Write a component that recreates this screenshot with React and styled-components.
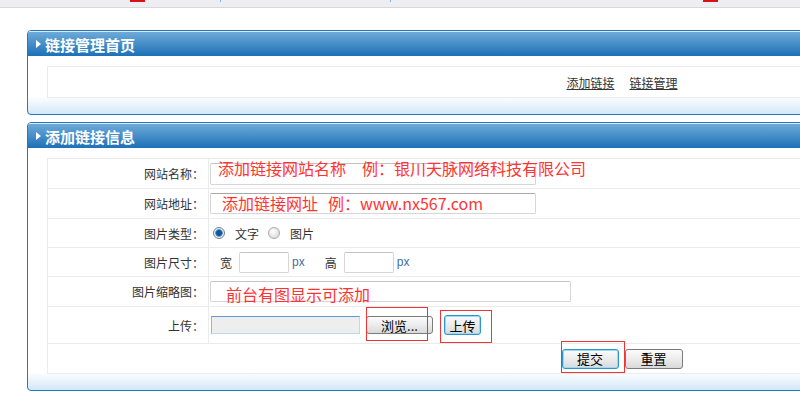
import styled, { createGlobalStyle } from 'styled-components';

const GlobalStyle = createGlobalStyle`
    html, body {
        margin: 0;
        padding: 0;
        background: #fff;
        overflow: hidden;
    }

    body {
        font-family: "Noto Sans CJK SC", "Liberation Sans", sans-serif;
        font-size: 12px;
        color: #333;
    }
`

const App = () => {
    return (
        <>
            <GlobalStyle />
            <TopStrip>
                <Tick $ml={130} $w={15} $c='#d8121a' />
                <Tick $ml={75} $w={1} $c='#7fb6e6' />
                <Tick $ml={169} $w={1} $c='#7fb6e6' />
                <Tick $ml={312} $w={15} $c='#d8121a' />
            </TopStrip>
            <Main>
                <Panel>
                    <Header>链接管理首页</Header>
                    <Body>
                        <Table>
                            <Row $h={30}>
                                <Centered $gap={15}>
                                    <Link href='#'>添加链接</Link>
                                    <Link href='#'>链接管理</Link>
                                </Centered>
                            </Row>
                        </Table>
                    </Body>
                </Panel>

                <Panel>
                    <Header>添加链接信息</Header>
                    <Body>
                        <Table>
                            <Row $h={29}>
                                <Label>网站名称：</Label>
                                <Value>
                                    <Field>
                                        <TextInput $w={326} $h={22} />
                                        <Note $x={8} $y={-3}>添加链接网站名称　例：银川天脉网络科技有限公司</Note>
                                    </Field>
                                </Value>
                            </Row>
                            <Row $h={29}>
                                <Label>网站地址：</Label>
                                <Value>
                                    <Field>
                                        <TextInput $w={326} $h={21} $dark />
                                        <Note $x={12} $y={2}>添加链接网址<Spacer $w={10} />例：www.nx567.com</Note>
                                    </Field>
                                </Value>
                            </Row>
                            <Row $h={28}>
                                <Label>图片类型：</Label>
                                <Value>
                                    <Radio $on $ml={3} />
                                    <Caption $ml={10}>文字</Caption>
                                    <Radio $ml={9} />
                                    <Caption $ml={10}>图片</Caption>
                                </Value>
                            </Row>
                            <Row $h={28}>
                                <Label>图片尺寸：</Label>
                                <Value>
                                    <Caption $ml={10}>宽</Caption>
                                    <TextInput $w={50} $h={21} $ml={7} />
                                    <Unit>px</Unit>
                                    <Caption $ml={20}>高</Caption>
                                    <TextInput $w={50} $h={21} $ml={7} />
                                    <Unit>px</Unit>
                                </Value>
                            </Row>
                            <Row $h={29}>
                                <Label>图片缩略图：</Label>
                                <Value>
                                    <Field>
                                        <TextInput $w={361} $h={21} />
                                        <Note $x={16} $y={5}>前台有图显示可添加</Note>
                                    </Field>
                                </Value>
                            </Row>
                            <Row $h={36}>
                                <Label>上传：</Label>
                                <Value>
                                    <FileBox />
                                    <Marked $ml={6}>
                                        <Button $w={67} $h={18}>浏览...</Button>
                                        <RedBox $inset='-9px 5px -7px 0' />
                                    </Marked>
                                    <Marked $ml={11}>
                                        <Button $w={37} $h={20} $blue>上传</Button>
                                        <RedBox $inset='-5px -11px -8px -4px' />
                                    </Marked>
                                </Value>
                            </Row>
                            <Row $h={29}>
                                <Centered $gap={6}>
                                    <Marked>
                                        <Button $w={57} $h={20} $blue>提交</Button>
                                        <RedBox $inset='-8px -6px -4px -1px' />
                                    </Marked>
                                    <Button $w={58} $h={20}>重置</Button>
                                </Centered>
                            </Row>
                        </Table>
                    </Body>
                </Panel>
            </Main>
        </>
    )
}

const TopStrip = styled.div`
    display: flex;
    align-items: flex-start;
    height: 7px;
    background: #eeedf2;
    border-bottom: 1px solid #d7d7dc;
`

const Tick = styled.span`
    flex: none;
    margin-left: ${ p => p.$ml }px;
    width: ${ p => p.$w }px;
    height: 2px;
    background: ${ p => p.$c };
`

const Main = styled.main`
    padding: 22px 0 0 27px;
`

const Panel = styled.section`
    width: 1190px;
    box-sizing: border-box;
    border: 1px solid #2677bd;
    border-radius: 4px;
    overflow: hidden;
    background: linear-gradient(to bottom, #fff calc(100% - 18px), #d3e8f8);

    & + & {
        margin-top: 7px;
    }
`

const Header = styled.h2`
    display: flex;
    align-items: center;
    height: 24px;
    margin: 0;
    padding-left: 8px;
    border-top: 1px solid #d8e9f6;

    background: linear-gradient(#6eaad8, #1c71b7);
    color: #fff;
    font-size: 15px;
    font-weight: 700;

    &::before {
        content: '';
        margin-right: 4px;
        border-left: 5px solid #fff;
        border-top: 4px solid transparent;
        border-bottom: 4px solid transparent;
    }
`

const Body = styled.div`
    padding: 10px 19px 16px;
`

const Table = styled.div`
    border: 1px solid #ebebeb;
    background: #fff;
`

const Row = styled.div`
    display: grid;
    grid-template-columns: 161px 1fr;
    height: ${ p => p.$h }px;
    border-top: 1px solid #ebebeb;

    &:first-child {
        border-top: none;
    }
`

const Label = styled.div`
    display: flex;
    align-items: center;
    justify-content: flex-end;
    padding-right: 4px;
    border-right: 1px solid #ebebeb;
`

const Value = styled.div`
    display: flex;
    align-items: center;
    padding-left: 1px;
`

const Centered = styled.div`
    grid-column: 1 / -1;
    display: flex;
    align-items: center;
    justify-content: center;
    gap: ${ p => p.$gap }px;
`

const Link = styled.a`
    color: #333;
    text-decoration: underline;
`

const Field = styled.span`
    position: relative;
    display: inline-flex;
`

const TextInput = styled.input`
    width: ${ p => p.$w }px;
    height: ${ p => p.$h }px;
    box-sizing: border-box;
    margin: 0 0 0 ${ p => p.$ml || 0 }px;
    padding: 0;
    border: 1px solid #d6d6d6;
    border-top-color: ${ p => p.$dark ? '#a9a9a9' : '#c4c4c4' };
    border-radius: 2px;
    background: #fff;
`

const Note = styled.span`
    position: absolute;
    left: ${ p => p.$x }px;
    top: ${ p => p.$y }px;
    color: #ff3333;
    font-size: 16px;
    line-height: 16px;
    white-space: nowrap;
    pointer-events: none;
`

const Spacer = styled.span`
    display: inline-block;
    width: ${ p => p.$w }px;
`

const Radio = styled.span`
    flex: none;
    width: 12px;
    height: 12px;
    box-sizing: border-box;
    margin-left: ${ p => p.$ml }px;
    border-radius: 50%;
    border: 1px solid ${ p => p.$on ? '#6f8397' : '#a8a8a8' };
    background: ${ p => p.$on
        ? 'radial-gradient(circle, #12549c 0 2.5px, #5e9bd4 3.5px, #e6edf3 4.2px)'
        : 'radial-gradient(circle at 40% 35%, #ffffff, #d2d2d2)' };
`

const Caption = styled.span`
    margin-left: ${ p => p.$ml }px;
`

const Unit = styled.span`
    margin-left: 3px;
    color: #456c9e;
    font-family: "Liberation Sans", sans-serif;
`

const FileBox = styled.span`
    width: 149px;
    height: 18px;
    box-sizing: border-box;
    margin-left: 1px;
    border: 1px solid #b9dbf1;
    border-top-color: #5c9bd2;
    border-left-color: #8fb8dc;
    background: #eeeeee;
`

const Marked = styled.span`
    position: relative;
    display: inline-flex;
    margin-left: ${ p => p.$ml || 0 }px;
`

const RedBox = styled.span`
    position: absolute;
    inset: ${ p => p.$inset };
    border: 1px solid #f03434;
    pointer-events: none;
`

const Button = styled.button`
    width: ${ p => p.$w }px;
    height: ${ p => p.$h }px;
    padding: 0;
    border-radius: 3px;
    border: 1px solid ${ p => p.$blue ? '#2b95d2' : '#7b7b7b' };
    box-shadow: ${ p => p.$blue ? 'inset 0 0 0 1px #9dd9f5' : 'none' };
    background: linear-gradient(#fbfbfb, #ececec 50%, #d9d9d9);

    font-family: "Noto Sans CJK SC", sans-serif;
    font-size: 13px;
    line-height: 1;
    color: #000;
`

export default App
